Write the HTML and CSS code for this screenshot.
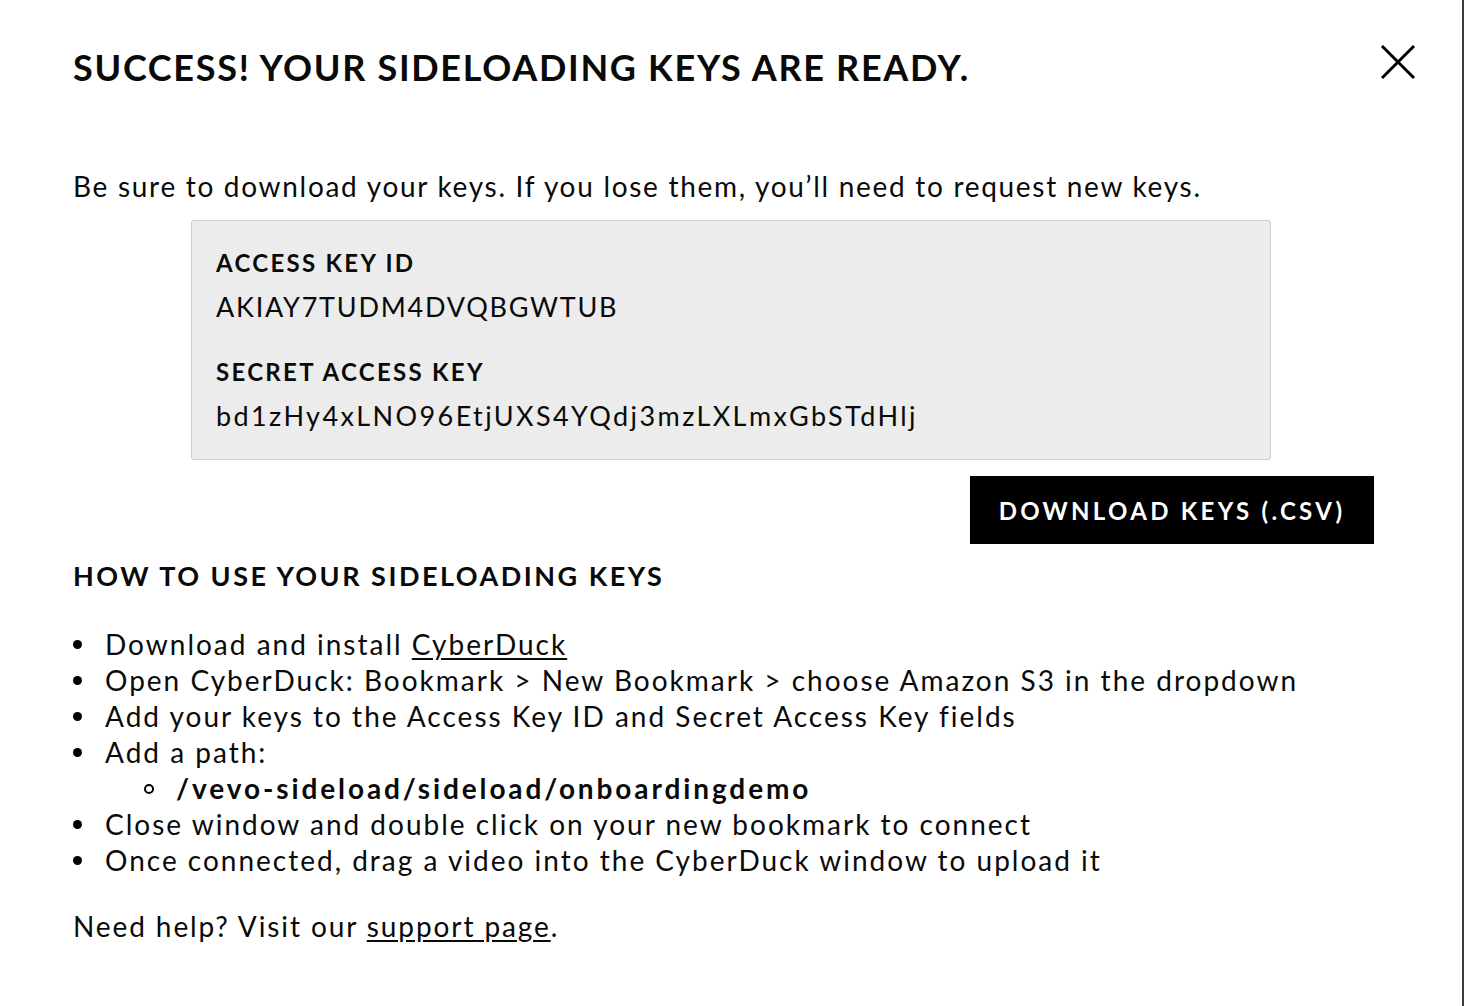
FILE: index.html
```html
<!DOCTYPE html>
<html>
<head>
	<title>Sideloading keys</title>
	<link rel="stylesheet" href="styles.css">
</head>
<body>
	<div class="modal">

		<button class="close" type="button" aria-label="Close">
			<svg width="36" height="36" viewBox="0 0 36 36">
				<path d="M2 2 L34 34 M34 2 L2 34" stroke="#000" stroke-width="3" fill="none"/>
			</svg>
		</button>

		<h1 class="title">SUCCESS! YOUR SIDELOADING KEYS ARE READY.</h1>

		<p class="intro">Be sure to download your keys. If you lose them, you’ll need to request new keys.</p>

		<div class="keys">
			<div class="field">
				<div class="label">ACCESS KEY ID</div>
				<div class="value">AKIAY7TUDM4DVQBGWTUB</div>
			</div>
			<div class="field">
				<div class="label">SECRET ACCESS KEY</div>
				<div class="value secret">bd1zHy4xLNO96EtjUXS4YQdj3mzLXLmxGbSTdHlj</div>
			</div>
		</div><!-- / keys -->

		<div class="actions">
			<a class="btn" href="#">DOWNLOAD KEYS (.CSV)</a>
		</div>

		<h2 class="howto">HOW TO USE YOUR SIDELOADING KEYS</h2>

		<ul class="steps">
			<li>Download and install <a href="#">CyberDuck</a></li>
			<li>Open CyberDuck: Bookmark &gt; New Bookmark &gt; choose Amazon S3 in the dropdown</li>
			<li>Add your keys to the Access Key ID and Secret Access Key fields</li>
			<li>Add a path:
				<ul>
					<li><strong>/vevo-sideload/sideload/onboardingdemo</strong></li>
				</ul>
			</li>
			<li>Close window and double click on your new bookmark to connect</li>
			<li>Once connected, drag a video into the CyberDuck window to upload it</li>
		</ul>

		<p class="help">Need help? Visit our <a href="#">support page</a>.</p>

	</div><!-- / modal -->
</body>
</html>
```

FILE: styles.css
```css
html, body {
	margin: 0;
	padding: 0;
	background: #fff;
}

body {
	font-family: Lato, "Noto Sans", sans-serif;
	color: #0a0a0a;
}

.modal {
	position: relative;
	box-sizing: border-box;
	width: 1464px;
	min-height: 1006px;
	padding: 47px 73px 0 73px;
	border-right: 2px solid #3a3a3a;
}

.close {
	position: absolute;
	top: 44px;
	right: 46px;
	padding: 0;
	border: 0;
	background: none;
	cursor: pointer;
	line-height: 0;
}

.title {
	margin: 0;
	font-size: 36px;
	line-height: 40px;
	font-weight: 700;
	letter-spacing: 1.7px;
}

.intro {
	margin: 81px 0 0 0;
	font-size: 28px;
	line-height: 36px;
	letter-spacing: 1.7px;
}

.keys {
	width: 1080px;
	box-sizing: border-box;
	margin: 16px auto 0 auto;
	padding: 24px 24px 25px 24px;
	background: #ececec;
	border: 1px solid #cfcfcf;
	border-radius: 3px;
}

.field + .field {
	margin-top: 29px;
}

.label {
	font-size: 24px;
	line-height: 36px;
	font-weight: 700;
	letter-spacing: 2.3px;
	margin-bottom: 8px;
}

.value {
	font-size: 27px;
	line-height: 36px;
	letter-spacing: 1.75px;
}

.value.secret {
	letter-spacing: 2.4px;
}

.actions {
	display: flex;
	justify-content: flex-end;
	margin-top: 16px;
	padding-right: 15px;
}

.btn {
	display: flex;
	align-items: center;
	justify-content: center;
	width: 404px;
	height: 68px;
	background: #000;
	color: #fff;
	text-decoration: none;
	font-size: 24px;
	font-weight: 700;
	letter-spacing: 3.3px;
}

.howto {
	margin: 14px 0 0 0;
	font-size: 27px;
	line-height: 36px;
	font-weight: 700;
	letter-spacing: 2.5px;
}

.steps {
	margin: 32px 0 0 0;
	padding: 0 0 0 32px;
	list-style: none;
	font-size: 28px;
	line-height: 36px;
	letter-spacing: 2px;
}

.steps li {
	position: relative;
}

.steps > li::before {
	content: "";
	position: absolute;
	left: -32px;
	top: 14px;
	width: 9px;
	height: 9px;
	border-radius: 50%;
	background: #000;
}

.steps ul {
	margin: 0;
	padding: 0 0 0 71px;
	list-style: none;
}

.steps ul li::before {
	content: "";
	position: absolute;
	left: -32px;
	top: 14px;
	width: 6px;
	height: 6px;
	border-radius: 50%;
	border: 2px solid #000;
}

.steps strong {
	letter-spacing: 2.9px;
}

.steps a,
.help a {
	color: inherit;
	text-underline-offset: 3px;
}

.help {
	margin: 30px 0 0 0;
	font-size: 28px;
	line-height: 36px;
	letter-spacing: 1.9px;
}
```
